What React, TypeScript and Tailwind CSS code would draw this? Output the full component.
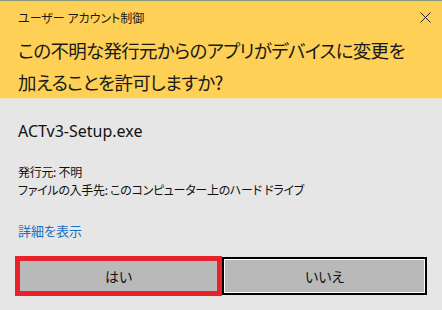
export default function App() {
  const jp = "font-['Noto_Sans_CJK_JP',sans-serif] [font-feature-settings:'palt']";
  return (
    <div className="w-[442px] h-[310px] bg-[#e6e6e6] overflow-hidden flex flex-col">
      <div className="h-[1px] shrink-0 bg-[#8a9b7b]" />
      <div className={`h-[97px] shrink-0 bg-[#fed055] px-[18px] flex flex-col ${jp}`}>
        <div className="flex shrink-0 items-center justify-between h-[32px] pt-[1px]">
          <span className="text-[12px] text-[#1a1a1a] leading-none whitespace-nowrap">ユーザー アカウント制御</span>
          <svg width="11" height="11" viewBox="0 0 11 11" className="mr-[-7px] shrink-0">
            <path d="M0.5 0.5 L10.5 10.5 M10.5 0.5 L0.5 10.5" stroke="#222" strokeWidth="1" />
          </svg>
        </div>
        <div className="shrink-0 text-[18.5px] tracking-[-0.7px] leading-[32px] text-[#1a1a1a] whitespace-nowrap mt-[1px]">
          <div>この不明な発行元からのアプリがデバイスに変更を</div>
          <div>加えることを許可しますか?</div>
        </div>
      </div>
      <div className="h-[1px] shrink-0 bg-[#f2e4b7]" />
      <div className="flex flex-col px-[18px]">
        <div className="mt-[21px] text-[16px] leading-[22px] text-[#111] font-['Noto_Sans',sans-serif]">
          ACTv3-Setup.exe
        </div>
        <div className={`mt-[21px] text-[12px] tracking-[-0.3px] leading-[18px] text-[#111] ${jp}`}>
          <div>発行元: 不明</div>
          <div>ファイルの入手先: このコンピューター上のハード ドライブ</div>
        </div>
        <div className={`mt-[23px] text-[13px] leading-[18px] text-[#1c6fc0] ${jp}`}>詳細を表示</div>
      </div>
      <div className={`mt-[16px] pl-[15px] flex items-start ${jp}`}>
        <div className="w-[207px] h-[40px] border-[5px] border-[#e8212a] bg-[#b9b9b9] flex items-center justify-center text-[14px] text-[#111]">
          はい
        </div>
        <div className="mt-[1px] w-[205px] h-[38px] border-2 border-black bg-[#b9b9b9] flex">
          <div className="flex-1 border border-white flex items-center justify-center text-[14px] text-[#111]">
            いいえ
          </div>
        </div>
      </div>
    </div>
  );
}
